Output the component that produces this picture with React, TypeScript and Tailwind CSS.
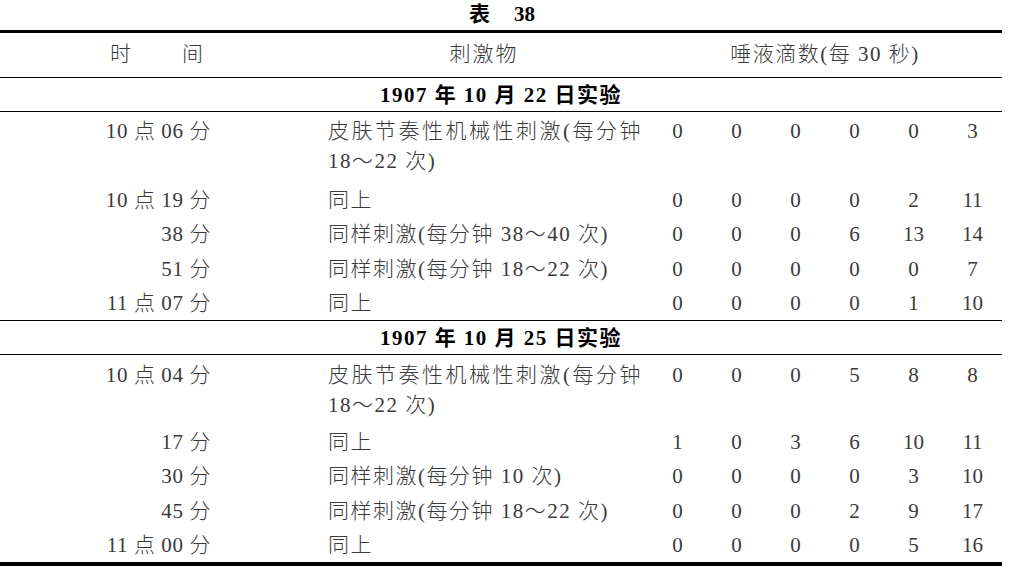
import React from "react";

type Row = {
  time: string;
  stim: React.ReactNode;
  nums: string[];
  double?: boolean;
  h: string;
};

const twoLine = (
  <>
    <span className="tracking-[2.5px]">皮肤节奏性机械性刺激(每分钟</span>
    <br />
    18～22 次)
  </>
);

const sec1: Row[] = [
  { time: "10 点 06 分", stim: twoLine, nums: ["0", "0", "0", "0", "0", "3"], double: true, h: "h-[70px] pt-[4px]" },
  { time: "10 点 19 分", stim: "同上", nums: ["0", "0", "0", "0", "2", "11"], h: "h-[35px]" },
  { time: "38 分", stim: "同样刺激(每分钟 38～40 次)", nums: ["0", "0", "0", "6", "13", "14"], h: "h-[34px]" },
  { time: "51 分", stim: "同样刺激(每分钟 18～22 次)", nums: ["0", "0", "0", "0", "0", "7"], h: "h-[35px]" },
  { time: "11 点 07 分", stim: "同上", nums: ["0", "0", "0", "0", "1", "10"], h: "h-[34px]" },
];

const sec2: Row[] = [
  { time: "10 点 04 分", stim: twoLine, nums: ["0", "0", "0", "5", "8", "8"], double: true, h: "h-[69px] pt-[5px]" },
  { time: "17 分", stim: "同上", nums: ["1", "0", "3", "6", "10", "11"], h: "h-[35px]" },
  { time: "30 分", stim: "同样刺激(每分钟 10 次)", nums: ["0", "0", "0", "0", "3", "10"], h: "h-[34px]" },
  { time: "45 分", stim: "同样刺激(每分钟 18～22 次)", nums: ["0", "0", "0", "2", "9", "17"], h: "h-[35px]" },
  { time: "11 点 00 分", stim: "同上", nums: ["0", "0", "0", "0", "5", "16"], h: "h-[34px]" },
];

function DataRow({ r }: { r: Row }) {
  return (
    <div
      className={`grid grid-cols-[211px_437px_repeat(6,59px)] leading-[30px] text-[21px] ${r.h} ${
        r.double ? "items-start" : "items-center"
      }`}
    >
      <div className="text-right tracking-[0.6px] whitespace-nowrap">{r.time}</div>
      <div className="pl-[117px] tracking-[1.5px] whitespace-nowrap">{r.stim}</div>
      {r.nums.map((n, i) => (
        <div key={i} className="text-center">
          {n}
        </div>
      ))}
    </div>
  );
}

function DateRow({ text }: { text: string }) {
  return (
    <div className="h-[34px] pt-[2px] flex items-center justify-center font-bold text-black text-[21px] tracking-[1.5px] border-b border-black">
      {text}
    </div>
  );
}

export default function App() {
  return (
    <div className="w-[1009px] h-[574px] bg-white overflow-hidden font-['Liberation_Serif','Noto_Sans_CJK_SC',serif] font-light text-[#3a3a3a]">
      <div className="w-[1002px]">
        <div className="h-[30px] pb-[1px] flex items-center justify-center font-bold text-black text-[21px] pl-[2px]">
          <span>表</span>
          <span className="ml-[24px]">38</span>
        </div>
        <div className="border-t-[3px] border-black" />
        <div className="h-[45px] grid grid-cols-[211px_437px_354px] items-center text-[21px] border-b border-black">
          <div className="flex justify-end pr-[8px]">
            <span>时</span>
            <span className="ml-[51px]">间</span>
          </div>
          <div className="pl-[117px] pr-[8px] text-center tracking-[2px]">刺激物</div>
          <div className="text-center tracking-[1.5px]">唾液滴数(每 30 秒)</div>
        </div>
        <DateRow text="1907 年 10 月 22 日实验" />
        <div className="border-b border-black">
          {sec1.map((r, i) => (
            <DataRow key={i} r={r} />
          ))}
        </div>
        <DateRow text="1907 年 10 月 25 日实验" />
        <div className="border-b-4 border-black">
          {sec2.map((r, i) => (
            <DataRow key={i} r={r} />
          ))}
        </div>
      </div>
    </div>
  );
}
